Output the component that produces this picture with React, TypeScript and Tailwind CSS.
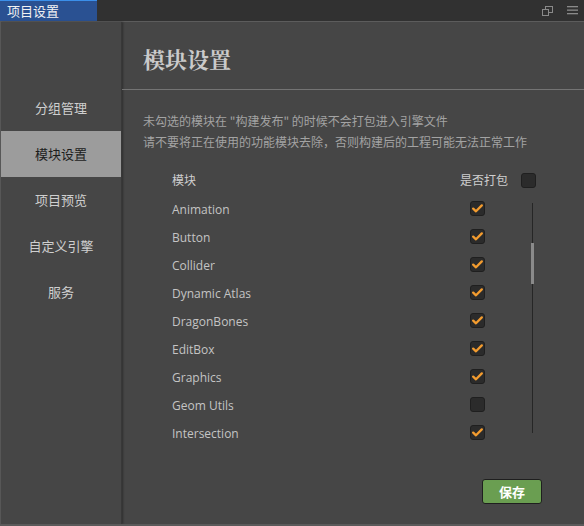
import React from "react";

const modules: [string, boolean][] = [
  ["Animation", true],
  ["Button", true],
  ["Collider", true],
  ["Dynamic Atlas", true],
  ["DragonBones", true],
  ["EditBox", true],
  ["Graphics", true],
  ["Geom Utils", false],
  ["Intersection", true],
];

const nav = ["分组管理", "模块设置", "项目预览", "自定义引擎", "服务"];

function Check({ checked }: { checked: boolean }) {
  return (
    <div className="w-[15px] h-[15px] rounded-[3px] bg-[#2b2b2b] border border-[#1f1f1f] flex items-center justify-center">
      {checked && (
        <svg width="11" height="9" viewBox="0 0 11 9">
          <path d="M1.2 4.6 L4 7.3 L9.8 1.4" fill="none" stroke="#f39c2f" strokeWidth="2.3" strokeLinejoin="round" strokeLinecap="round" />
        </svg>
      )}
    </div>
  );
}

export default function App() {
  const cjk = { fontFamily: '"Noto Sans CJK SC", "Noto Sans", sans-serif' };
  return (
    <div className="w-[584px] h-[526px] bg-[#464646] flex flex-col overflow-hidden" style={cjk}>
      <div className="h-[21px] bg-[#313131] flex shrink-0">
        <div className="w-[97px] bg-[#2a5192] border-t border-[#3b8fea] text-[#f2f2f2] text-[13px] leading-[19px] pl-[7px]">
          项目设置
        </div>
        <div className="flex-1" />
        <div className="flex items-center gap-[14px] pr-[6px]">
          <svg width="11" height="10" viewBox="0 0 11 10">
            <rect x="3.5" y="0.5" width="7" height="6" fill="none" stroke="#8a8a8a" />
            <rect x="0.5" y="3.5" width="6" height="6" fill="#313131" stroke="#8a8a8a" />
          </svg>
          <svg width="11" height="9" viewBox="0 0 11 9">
            <rect x="0" y="0" width="11" height="1.3" fill="#8a8a8a" />
            <rect x="0" y="3.5" width="11" height="1.3" fill="#8a8a8a" />
            <rect x="0" y="7" width="11" height="1.3" fill="#8a8a8a" />
          </svg>
        </div>
      </div>
      <div className="h-px bg-[#5c5c5c] shrink-0" />
      <div className="flex flex-1 min-h-0">
        <div className="w-[122px] shrink-0 border-l border-[#575757] border-r border-r-[#383838] shadow-[1px_0_2px_rgba(0,0,0,0.35)] pt-[63px] flex flex-col">
          {nav.map((n) => (
            <div
              key={n}
              className={
                n === "模块设置"
                  ? "h-[46px] flex items-center justify-center text-[13px] bg-[#9c9c9c] text-[#1d1d1d]"
                  : "h-[46px] flex items-center justify-center text-[13px] text-[#cfcfcf]"
              }
            >
              {n}
            </div>
          ))}
        </div>
        <div className="flex-1 flex flex-col">
          <div className="pt-[22px] pl-[21px] text-[22px] leading-[30px] font-bold text-[#cacaca]" style={{ fontFamily: '"Noto Serif CJK SC", "Noto Sans CJK SC", serif' }}>
            模块设置
          </div>
          <div className="mt-[15px] h-px bg-[#747474]" />
          <div className="mt-[20px] pl-[21px] text-[12px] leading-[21px] text-[#a3a3a3]">
            <div>未勾选的模块在 "构建发布" 的时候不会打包进入引擎文件</div>
            <div>请不要将正在使用的功能模块去除，否则构建后的工程可能无法正常工作</div>
          </div>
          <div className="mt-[14px] pl-[50px] h-[28px] flex items-center text-[12px] text-[#cfcfcf]">
            <div className="w-[288px]">模块</div>
            <div className="w-[48px]">是否打包</div>
            <div className="ml-[13px]">
              <Check checked={false} />
            </div>
          </div>
          <div className="flex pl-[50px]">
            <div className="flex flex-col">
              {modules.map(([name, on]) => (
                <div key={name} className="h-[28px] flex items-center text-[12px] text-[#c4c4c4]" style={{ fontFamily: '"Open Sans", "Noto Sans", sans-serif' }}>
                  <div className="w-[298px] pt-[3px]">{name}</div>
                  <Check checked={on} />
                </div>
              ))}
            </div>
            <div className="ml-[46px] mt-[9px] mb-[13px] w-[3px] flex justify-center relative">
              <div className="w-px h-full bg-[#262626]" />
              <div className="absolute top-[40px] left-0 w-[3px] h-[41px] bg-[#8a8a8a]" />
            </div>
          </div>
          <div className="mt-[33px] self-end mr-[42px] w-[60px] h-[25px] rounded-[3px] bg-[#6a9e51] border border-[#1f1f1f] flex items-center justify-center text-white text-[13px] font-bold">
            保存
          </div>
        </div>
      </div>
      <div className="h-[2px] bg-[#5a5a5a] shrink-0" />
    </div>
  );
}
